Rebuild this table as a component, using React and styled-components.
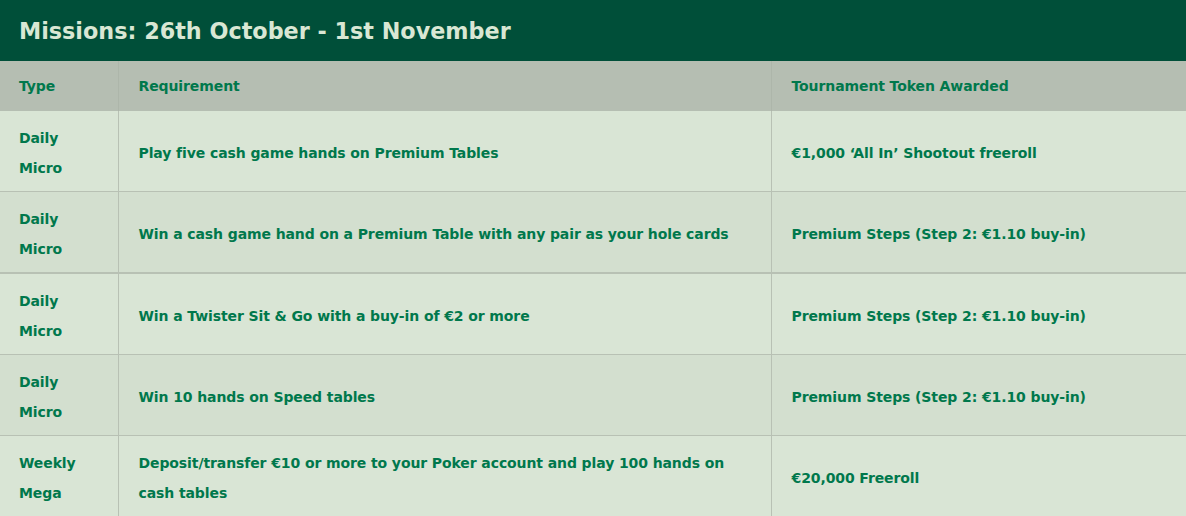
import React from "react";
import styled, { createGlobalStyle } from "styled-components";

const Global = createGlobalStyle`
  html, body { margin: 0; padding: 0; background: #d9e5d5; }
  body { font-family: "DejaVu Sans", Verdana, sans-serif; }
`;

const Wrap = styled.div`
  width: 1186px;
`;

const TitleBar = styled.div`
  background: #004f39;
  height: 61px;
  display: flex;
  align-items: center;
  padding: 0 20px 0 19px;
  box-sizing: border-box;
`;

const Title = styled.h1`
  margin: 0;
  color: #d9e7d4;
  font-size: 22.3px;
  font-weight: bold;
`;

const Table = styled.table`
  width: 100%;
  border-collapse: collapse;
  table-layout: fixed;
  color: #00784c;
  font-size: 14px;
  font-weight: bold;
  letter-spacing: -0.1px;
`;

const HeadCell = styled.th`
  background: #b5beb2;
  height: 50px;
  padding: 0 19px 0 20px;
  text-align: left;
  font-weight: bold;
  border-left: 1px solid #adb6aa;
  &:first-child { border-left: none; padding-left: 19px; }
`;

const Row = styled.tr`
  background: ${(p) => (p.$alt ? "#d3dfcf" : "#d9e5d5")};
  border-bottom: ${(p) => (p.$thick ? "2px" : "1px")} solid #b8c1b4;
`;

const Cell = styled.td`
  padding: 12px 19px 8px 20px;
  line-height: 30px;
  height: 60px;
  vertical-align: middle;
  border-left: 1px solid #b8c1b4;
  &:first-child { border-left: none; padding-left: 19px; }
`;

const rows = [
  { type: ["Daily", "Micro"], req: "Play five cash game hands on Premium Tables", prize: "€1,000 ‘All In’ Shootout freeroll" },
  { type: ["Daily", "Micro"], req: "Win a cash game hand on a Premium Table with any pair as your hole cards", prize: "Premium Steps (Step 2: €1.10 buy-in)", thick: true },
  { type: ["Daily", "Micro"], req: "Win a Twister Sit & Go with a buy-in of €2 or more", prize: "Premium Steps (Step 2: €1.10 buy-in)" },
  { type: ["Daily", "Micro"], req: "Win 10 hands on Speed tables", prize: "Premium Steps (Step 2: €1.10 buy-in)" },
  { type: ["Weekly", "Mega"], req: "Deposit/transfer €10 or more to your Poker account and play 100 hands on cash tables", prize: "€20,000 Freeroll" },
];

export default function App() {
  return (
    <Wrap>
      <Global />
      <TitleBar>
        <Title>Missions: 26th October - 1st November</Title>
      </TitleBar>
      <Table>
        <colgroup>
          <col style={{ width: 118 }} />
          <col style={{ width: 653 }} />
          <col />
        </colgroup>
        <thead>
          <tr>
            <HeadCell>Type</HeadCell>
            <HeadCell>Requirement</HeadCell>
            <HeadCell>Tournament Token Awarded</HeadCell>
          </tr>
        </thead>
        <tbody>
          {rows.map((r, i) => (
            <Row key={i} $alt={i % 2 === 1} $thick={r.thick}>
              <Cell>
                {r.type[0]}
                <br />
                {r.type[1]}
              </Cell>
              <Cell>{r.req}</Cell>
              <Cell>{r.prize}</Cell>
            </Row>
          ))}
        </tbody>
      </Table>
    </Wrap>
  );
}
